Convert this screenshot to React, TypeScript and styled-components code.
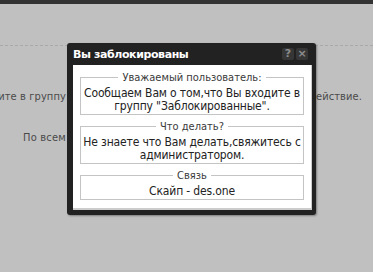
import React from "react";
import styled, { createGlobalStyle } from "styled-components";

const Global = createGlobalStyle`
  html, body { margin: 0; padding: 0; }
  body {
    width: 373px;
    height: 272px;
    overflow: hidden;
    background: #c0c0c0;
    font-family: "DejaVu Sans Condensed", "DejaVu Sans", sans-serif;
  }
`;

const Page = styled.div`
  position: relative;
  width: 373px;
  height: 272px;
  overflow: hidden;
`;

const TopBar = styled.div`
  height: 4px;
  background: #333333;
`;

const Divider = styled.div`
  margin-top: 41px;
  border-top: 1px dashed #a9a9a9;
`;

const NoticeRight = styled.div`
  display: flex;
  justify-content: flex-end;
  margin-top: 44px;
  padding-right: 11px;
  white-space: nowrap;
  font-size: 11px;
  line-height: 13px;
  letter-spacing: 0.1px;
  color: #4a4a4a;
`;

const NoticeLeft = styled.div`
  margin-top: 28px;
  padding-left: 23px;
  white-space: nowrap;
  font-size: 11px;
  line-height: 13px;
  letter-spacing: 0.2px;
  color: #4a4a4a;
`;

const Dialog = styled.div`
  position: absolute;
  left: 67px;
  top: 43px;
  width: 249px;
  height: 172px;
  box-sizing: border-box;
  background: #222222;
  border-radius: 3px;
  box-shadow: 1px 1px 2px rgba(0, 0, 0, 0.35);
  display: flex;
  flex-direction: column;
  padding: 0 4px 5px 6px;
`;

const TitleBar = styled.div`
  height: 25px;
  display: flex;
  align-items: center;
  padding-right: 4px;
`;

const Title = styled.div`
  flex: 1;
  font-family: "DejaVu Sans", sans-serif;
  font-weight: bold;
  font-size: 11px;
  letter-spacing: -0.4px;
  color: #ffffff;
`;

const Tools = styled.div`
  display: flex;
  gap: 2px;
`;

const ToolButton = styled.div`
  width: 12px;
  height: 12px;
  border-radius: 2px;
  background: #363636;
  color: #8c8c8c;
  font-family: "DejaVu Sans", sans-serif;
  font-weight: bold;
  font-size: 11px;
  line-height: 12px;
  text-align: center;
`;

const Panel = styled.div`
  flex: 1;
  background: #ffffff;
  border-right: 1px solid #cccccc;
  border-bottom: 2px solid #cccccc;
  padding: 6px 7px 8px 7px;
  display: flex;
  flex-direction: column;
  gap: 5px;
`;

const Box = styled.fieldset`
  margin: 0;
  padding: 3px 2px 1px;
  border: 1px solid #c4c4c4;
  min-width: 0;
`;

const Legend = styled.legend`
  margin: 0 auto;
  padding: 0 4px;
  font-size: 11px;
  line-height: 13px;
  color: #3a3a3a;
`;

const Body = styled.div`
  text-align: center;
  font-size: 12px;
  letter-spacing: -0.15px;
  line-height: 13px;
  color: #222222;
`;

const sections = [
  {
    title: "Уважаемый пользователь:",
    text: "Сообщаем Вам о том,что Вы входите в группу \"Заблокированные\".",
  },
  {
    title: "Что делать?",
    text: "Не знаете что Вам делать,свяжитесь с администратором.",
  },
  { title: "Связь", text: "Скайп - des.one" },
];

export default function App() {
  return (
    <Page>
      <Global />
      <TopBar />
      <Divider />
      <NoticeRight>
        Вы входите в группу пользователей, которым запрещено данное действие.
      </NoticeRight>
      <NoticeLeft>По всем вопросам обращайтесь к администрации.</NoticeLeft>
      <Dialog>
        <TitleBar>
          <Title>Вы заблокированы</Title>
          <Tools>
            <ToolButton>?</ToolButton>
            <ToolButton>×</ToolButton>
          </Tools>
        </TitleBar>
        <Panel>
          {sections.map((s) => (
            <Box key={s.title}>
              <Legend>{s.title}</Legend>
              <Body>{s.text}</Body>
            </Box>
          ))}
        </Panel>
      </Dialog>
    </Page>
  );
}
